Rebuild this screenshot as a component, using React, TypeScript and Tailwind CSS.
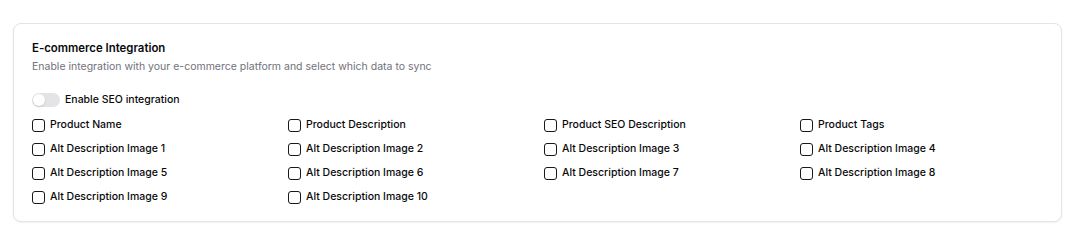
import React from 'react';

const fields = [
  'Product Name',
  'Product Description',
  'Product SEO Description',
  'Product Tags',
  'Alt Description Image 1',
  'Alt Description Image 2',
  'Alt Description Image 3',
  'Alt Description Image 4',
  'Alt Description Image 5',
  'Alt Description Image 6',
  'Alt Description Image 7',
  'Alt Description Image 8',
  'Alt Description Image 9',
  'Alt Description Image 10',
];

const App: React.FC = () => {
  return (
    <div className="min-h-[252px] bg-white pl-[13px] pr-[18px] pt-[23px] font-['Inter',sans-serif]">
      <div className="w-[1049px] rounded-lg border border-[#e4e4e7] bg-white px-[18px] pb-[16px] pt-[16px] shadow-[0_1px_2px_rgba(0,0,0,0.06)]">
        {/* Header */}
        <h2 className="text-[11.4px] leading-4 font-semibold text-[#09090b]">E-commerce Integration</h2>
        <p className="mt-[3px] text-[10.5px] leading-4 text-[#71717a]">
          Enable integration with your e-commerce platform and select which data to sync
        </p>

        {/* Toggle */}
        <div className="mt-[17px] flex h-4 items-center gap-[4px]">
          <button className="flex h-[14px] w-[28px] items-center rounded-full bg-[#e4e4e7] px-[1px]">
            <span className="h-[12px] w-[12px] rounded-full bg-white shadow-[0_1px_2px_rgba(0,0,0,0.15)]" />
          </button>
          <span className="ml-[1px] text-[10.5px] leading-4 font-medium text-[#09090b]">Enable SEO integration</span>
        </div>

        {/* Checkboxes */}
        <div className="mt-[9px] grid grid-cols-4 gap-x-[13px] gap-y-2">
          {fields.map((f) => (
            <label key={f} className="flex h-4 items-center gap-[5px]">
              <span className="h-[13px] w-[13px] rounded-[3px] border border-[#18181b] bg-white" />
              <span className="text-[10.5px] leading-4 font-medium text-[#09090b]">{f}</span>
            </label>
          ))}
        </div>
      </div>
    </div>
  );
};

export default App;
